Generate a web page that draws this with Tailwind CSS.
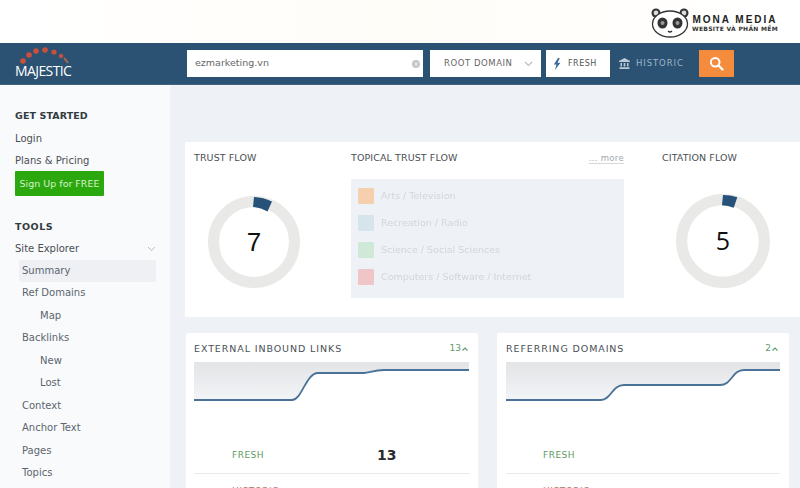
<!DOCTYPE html>
<html lang="en">
<head>
<meta charset="utf-8">
<title>Majestic</title>
<script src="https://cdn.jsdelivr.net/npm/@tailwindcss/browser@4"></script>
</head>
<body class="bg-white">
<div class="w-[800px] h-[488px] overflow-hidden font-['DejaVu_Sans',sans-serif] text-[#4a4f55]">

  <!-- top strip with watermark -->
  <div class="h-[43px] flex justify-end items-start pt-[8px] pr-[22px] bg-gradient-to-r from-white via-[#fffdf8] to-white">
    <svg class="w-[40px] h-[30px]" viewBox="0 0 40 30">
      <circle cx="6" cy="5" r="4.5" fill="#333"/>
      <circle cx="34" cy="5" r="4.5" fill="#333"/>
      <circle cx="6" cy="5" r="2.4" fill="#ddd"/>
      <circle cx="34" cy="5" r="2.4" fill="#ddd"/>
      <ellipse cx="20" cy="16" rx="17.5" ry="13" fill="#fff" stroke="#333" stroke-width="1.3"/>
      <ellipse cx="12.5" cy="15" rx="5" ry="5.5" fill="#333"/>
      <ellipse cx="27.5" cy="15" rx="5" ry="5.5" fill="#333"/>
      <circle cx="12.5" cy="15" r="2" fill="#999"/>
      <circle cx="27.5" cy="15" r="2" fill="#999"/>
      <path d="M18 23q2 2 4 0" fill="none" stroke="#333" stroke-width="1.2"/>
    </svg>
    <div class="ml-[2px] pt-[6px] flex flex-col items-center">
      <span class="text-[10px] leading-[11px] font-bold tracking-[2px] text-[#222] font-['Liberation_Sans',sans-serif]">MONA MEDIA</span>
      <span class="text-[6px] leading-[7px] font-bold tracking-[0.3px] text-[#333]">WEBSITE VÀ PHẦN MỀM</span>
    </div>
  </div>

  <!-- header bar -->
  <header class="h-[42px] bg-[#2b5272] flex items-center border-b border-[#41627e]">
    <div class="w-[187px] pl-[15px] shrink-0">
      <svg class="w-[60px] h-[17px] block -mt-[2px]" viewBox="0 0 60 17">
        <g fill="#c9503c">
          <circle cx="8" cy="14" r="2.8"/>
          <circle cx="14" cy="8" r="2.8"/>
          <circle cx="21" cy="4" r="2.8"/>
          <circle cx="30" cy="3" r="2.8"/>
          <circle cx="39" cy="5" r="2.6"/>
          <circle cx="46" cy="9" r="2.2"/>
        </g>
        <path d="M49 11q2 2 4 5" stroke="#a8694f" stroke-width="1.8" fill="none"/>
      </svg>
      <span class="block text-[14px] leading-[14px] text-white font-['Open_Sans',sans-serif] tracking-[-0.6px]">MAJESTIC</span>
    </div>
    <div class="w-[236px] h-[27px] bg-white flex items-center justify-between pl-[8px] pr-[3px] text-[9.5px] text-[#666]">
      <span>ezmarketing.vn</span>
      <span class="w-[8px] h-[8px] rounded-full bg-[#c4c7ca] text-white text-[6px] leading-[8px] text-center">×</span>
    </div>
    <div class="ml-[7px] w-[111px] h-[27px] bg-white flex items-center justify-between pl-[14px] pr-[8px] text-[8.5px] tracking-[0.55px] text-[#666]">
      <span>ROOT DOMAIN</span>
      <svg class="w-[9px] h-[6px]" viewBox="0 0 9 6"><path d="M1 1l3.5 3.5L8 1" fill="none" stroke="#b8bcc0" stroke-width="1.1"/></svg>
    </div>
    <div class="ml-[5px] w-[64px] h-[27px] bg-white flex items-center pl-[7px] text-[8px] tracking-[0.5px] text-[#555]">
      <svg class="w-[8px] h-[12px] mr-[7px]" viewBox="0 0 8 12"><path d="M5 0L0.8 6.5h2.6L2 12l5.4-7.2H4.6L6.8 0z" fill="#3f6a9c"/></svg>
      <span>FRESH</span>
    </div>
    <div class="ml-[9px] w-[71px] flex items-center text-[8.5px] tracking-[0.9px] text-[#9db6cb]">
      <svg class="w-[11px] h-[11px] mr-[6px]" viewBox="0 0 11 11" fill="#b9cbd9"><path d="M5.5 0L11 3v1H0V3z"/><path d="M1.5 5h1.5v3.5H1.5zM4.7 5h1.6v3.5H4.7zM8 5h1.5v3.5H8zM.5 9.3h10V11H.5z"/></svg>
      <span>HISTORIC</span>
    </div>
    <div class="ml-[9px] w-[35px] h-[27px] bg-[#f58b3c] flex items-center justify-center">
      <svg class="w-[15px] h-[15px]" viewBox="0 0 15 15"><circle cx="6.2" cy="6.2" r="4.3" fill="none" stroke="#fff" stroke-width="2"/><path d="M9.5 9.5L13.5 13.5" stroke="#fff" stroke-width="2.4" stroke-linecap="round"/></svg>
    </div>
  </header>

  <div class="flex h-[403px]">
    <!-- sidebar -->
    <aside class="w-[170px] shrink-0 bg-[#f9fafb] pl-[15px] pt-[24px] text-[10px] leading-[14px]">
      <h3 class="text-[9.5px] font-bold tracking-[0.1px] text-[#333a40]">GET STARTED</h3>
      <a class="block mt-[9px]">Login</a>
      <a class="block mt-[8px]">Plans &amp; Pricing</a>
      <a class="block mt-[3px] w-[89px] h-[25px] leading-[25px] text-center rounded-[1px] bg-[#2ba80e] text-[9.5px] text-[#d4f2c8]">Sign Up for FREE</a>
      <h3 class="mt-[24px] text-[9.5px] font-bold tracking-[0.5px] text-[#333a40]">TOOLS</h3>
      <div class="mt-[8px] w-[141px] flex items-center justify-between">
        <span>Site Explorer</span>
        <svg class="w-[9px] h-[6px]" viewBox="0 0 9 6"><path d="M1 1l3.5 3.5L8 1" fill="none" stroke="#b8bcc0" stroke-width="1"/></svg>
      </div>
      <ul class="mt-[4px] w-[141px] text-[#5b6570]">
        <li class="h-[22px] leading-[22px] ml-[4px] pl-[3px] rounded-[3px] bg-[#eef0f4]">Summary</li>
        <li class="h-[22.5px] leading-[22.5px] pl-[7px]">Ref Domains</li>
        <li class="h-[22.5px] leading-[22.5px] pl-[25px]">Map</li>
        <li class="h-[22.5px] leading-[22.5px] pl-[7px]">Backlinks</li>
        <li class="h-[22.5px] leading-[22.5px] pl-[25px]">New</li>
        <li class="h-[22.5px] leading-[22.5px] pl-[25px]">Lost</li>
        <li class="h-[22.5px] leading-[22.5px] pl-[7px]">Context</li>
        <li class="h-[22.5px] leading-[22.5px] pl-[7px]">Anchor Text</li>
        <li class="h-[22.5px] leading-[22.5px] pl-[7px]">Pages</li>
        <li class="h-[22.5px] leading-[22.5px] pl-[7px]">Topics</li>
      </ul>
    </aside>

    <!-- main -->
    <main class="flex-1 bg-[#eef1f5] pl-[15px] pt-[57px] overflow-hidden">
      <section class="h-[175px] bg-white flex">
        <div class="w-[166px] pl-[9px] pt-[10px] shrink-0">
          <h4 class="text-[9.5px] leading-[12px] tracking-[0.1px] text-[#4a4f55]">TRUST FLOW</h4>
          <div class="relative ml-[14px] mt-[32px] w-[92px] h-[92px]">
            <svg class="w-full h-full" viewBox="0 0 92 92">
              <circle cx="46" cy="46" r="40.5" fill="none" stroke="#e9e9e8" stroke-width="11"/>
              <path d="M46 1A45 45 0 0 1 64 5.5L59.5 15.5A35 35 0 0 0 45 11z" fill="#26527a"/>
            </svg>
            <span class="absolute inset-0 flex items-center justify-center text-[26px] text-[#111] font-['Liberation_Sans',sans-serif]">7</span>
          </div>
        </div>
        <div class="w-[273px] pt-[10px] shrink-0">
          <div class="flex justify-between items-center">
            <h4 class="text-[9.5px] leading-[12px] tracking-[0.1px] text-[#4a4f55]">TOPICAL TRUST FLOW</h4>
            <span class="text-[8.5px] tracking-[0.3px] text-[#a5a8ab] border-b border-[#d5d8da] leading-[10px]">... more</span>
          </div>
          <div class="mt-[15px] h-[119px] bg-[#eef1f5] pl-[7px] pt-[9px] flex flex-col gap-[11px] text-[9.5px] text-[#d2d6da]">
            <div class="flex items-center gap-[7px] h-[16px]"><i class="w-[16px] h-[16px] bg-[#f6d0ae] rounded-[1px]"></i><span class="blur-[0.5px]">Arts / Television</span></div>
            <div class="flex items-center gap-[7px] h-[16px]"><i class="w-[16px] h-[16px] bg-[#d6e5ec] rounded-[1px]"></i><span class="blur-[0.5px]">Recreation / Radio</span></div>
            <div class="flex items-center gap-[7px] h-[16px]"><i class="w-[16px] h-[16px] bg-[#cfe8d7] rounded-[1px]"></i><span class="blur-[0.5px]">Science / Social Sciences</span></div>
            <div class="flex items-center gap-[7px] h-[16px]"><i class="w-[16px] h-[16px] bg-[#efc5c5] rounded-[1px]"></i><span class="blur-[0.5px]">Computers / Software / Internet</span></div>
          </div>
        </div>
        <div class="pl-[38px] pt-[10px]">
          <h4 class="text-[9.5px] leading-[12px] tracking-[0.1px] text-[#4a4f55]">CITATION FLOW</h4>
          <div class="relative ml-[14px] mt-[30px] w-[94px] h-[94px]">
            <svg class="w-full h-full" viewBox="0 0 92 92">
              <circle cx="46" cy="46" r="40.5" fill="none" stroke="#e9e9e8" stroke-width="11"/>
              <path d="M46 1A45 45 0 0 1 60 3.2L56.5 13.5A35 35 0 0 0 45 11z" fill="#26527a"/>
            </svg>
            <span class="absolute inset-0 flex items-center justify-center text-[25px] text-[#111] font-['Open_Sans',sans-serif]">5</span>
          </div>
        </div>
      </section>

      <div class="mt-[16px] ml-[1px] flex gap-[19px]">
        <section class="w-[292px] shrink-0 h-[200px] bg-white rounded-[2px] px-[8px] pt-[10px]">
          <div class="flex justify-between items-center h-[12px] pr-[2px]">
            <h4 class="text-[9.5px] tracking-[0.9px]">EXTERNAL INBOUND LINKS</h4>
            <span class="flex items-center gap-[1px] text-[9px] text-[#5f9a68]">13<svg class="w-[6px] h-[4px]" viewBox="0 0 6 4"><path d="M.5 3.5L3 1l2.5 2.5" fill="none" stroke="#5f9a68" stroke-width="1.1"/></svg></span>
          </div>
          <svg class="block mt-[7px] w-[275px] h-[40px]" viewBox="0 0 275 40">
            <defs><linearGradient id="fillA" x1="0" y1="0" x2="0" y2="1"><stop offset="0" stop-color="#e3e4e6"/><stop offset="1" stop-color="#f2f4f7"/></linearGradient></defs>
            <path d="M0 38H98C108 38 112 11 124 11H170C175 11 180 8 190 8H275V0H0z" fill="url(#fillA)"/>
            <path d="M0 38H98C108 38 112 11 124 11H170C175 11 180 8 190 8H275" fill="none" stroke="#4a7299" stroke-width="1.8"/>
          </svg>
          <div class="mt-[40px] h-[32px] pb-[4px] flex items-center border-b border-[#e8e9ea]">
            <span class="w-[183px] pl-[38px] text-[9px] tracking-[0.5px] text-[#5e9a5e]">FRESH</span>
            <span class="text-[14px] font-bold text-[#2a2a2a]">13</span>
          </div>
          <div class="pl-[38px] pt-[11px] text-[9px] tracking-[0.5px] text-[#b07a70]">HISTORIC</div>
        </section>
        <section class="w-[292px] shrink-0 h-[200px] bg-white rounded-[2px] px-[9px] pt-[10px]">
          <div class="flex justify-between items-center h-[12px] pr-[2px]">
            <h4 class="text-[9.5px] tracking-[0.9px]">REFERRING DOMAINS</h4>
            <span class="flex items-center gap-[1px] text-[9px] text-[#5f9a68]">2<svg class="w-[6px] h-[4px]" viewBox="0 0 6 4"><path d="M.5 3.5L3 1l2.5 2.5" fill="none" stroke="#5f9a68" stroke-width="1.1"/></svg></span>
          </div>
          <svg class="block mt-[7px] w-[274px] h-[40px]" viewBox="0 0 274 40">
            <defs><linearGradient id="fillB" x1="0" y1="0" x2="0" y2="1"><stop offset="0" stop-color="#e3e4e6"/><stop offset="1" stop-color="#f2f4f7"/></linearGradient></defs>
            <path d="M0 38H95C105 38 106 23 118 23H214C226 23 226 8 238 8H274V0H0z" fill="url(#fillB)"/>
            <path d="M0 38H95C105 38 106 23 118 23H214C226 23 226 8 238 8H274" fill="none" stroke="#4a7299" stroke-width="1.8"/>
          </svg>
          <div class="mt-[40px] h-[32px] pb-[4px] flex items-center border-b border-[#e8e9ea]">
            <span class="pl-[37px] text-[9px] tracking-[0.5px] text-[#5e9a5e]">FRESH</span>
          </div>
          <div class="pl-[37px] pt-[11px] text-[9px] tracking-[0.5px] text-[#b07a70]">HISTORIC</div>
        </section>
      </div>
    </main>
  </div>
</div>
</body>
</html>
